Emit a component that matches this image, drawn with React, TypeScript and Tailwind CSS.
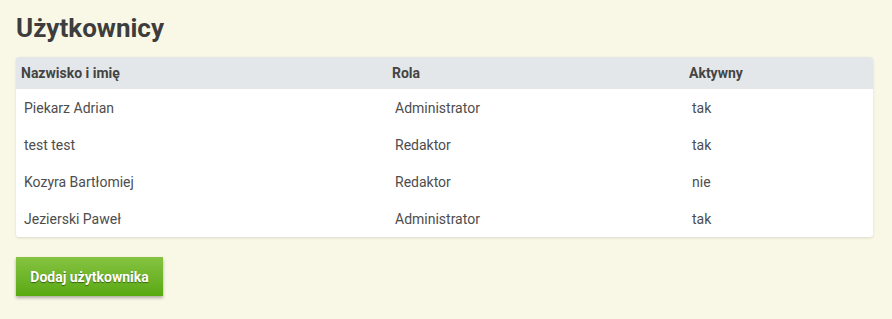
import React from 'react';

type User = { name: string; role: string; active: string };

const users: User[] = [
  { name: 'Piekarz Adrian', role: 'Administrator', active: 'tak' },
  { name: 'test test', role: 'Redaktor', active: 'tak' },
  { name: 'Kozyra Bartłomiej', role: 'Redaktor', active: 'nie' },
  { name: 'Jezierski Paweł', role: 'Administrator', active: 'tak' },
];

const App: React.FC = () => {
  return (
    <div className="min-h-[319px] bg-[#f9f8e6] px-4 pt-[11px] font-['Roboto',sans-serif]">
      <h1 className="text-[26px] font-bold leading-[34px] text-[#3d3d3d]">Użytkownicy</h1>

      <div className="mt-3 w-[857px] overflow-hidden rounded-[3px] bg-white shadow-[0_1px_3px_rgba(0,0,0,0.12)]">
        <table className="w-full border-collapse text-sm">
          <thead>
            <tr className="h-8 bg-[#e4e7ea] text-left font-bold text-[#444]">
              <th className="w-[373px] pl-[5px] font-bold">Nazwisko i imię</th>
              <th className="w-[297px] pl-[3px] font-bold">Rola</th>
              <th className="pl-[3px] font-bold">Aktywny</th>
            </tr>
          </thead>
          <tbody className="text-[#4d4d4d]">
            {users.map((u, i) => (
              <tr key={i} className="h-[37px]">
                <td className="pl-2">{u.name}</td>
                <td className="pl-1.5">{u.role}</td>
                <td className="pl-1.5">{u.active}</td>
              </tr>
            ))}
          </tbody>
        </table>
      </div>

      <button className="mt-5 h-[39px] w-[147px] bg-gradient-to-b from-[#86c340] to-[#58a90e] text-sm font-bold text-white shadow-[0_2px_3px_rgba(0,0,0,0.3)] [text-shadow:0_1px_1px_rgba(0,0,0,0.45)]">
        Dodaj użytkownika
      </button>
    </div>
  );
};

export default App;
